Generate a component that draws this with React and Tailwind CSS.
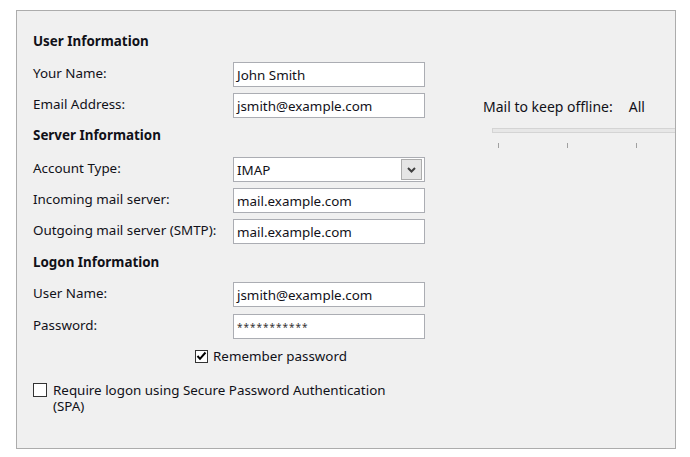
import React from "react";

const font = { fontFamily: '"Noto Sans", "Open Sans", sans-serif' };

function Field({ label, value, mt = "mt-[6px]" }) {
  return (
    <div className={`flex items-center h-[25px] ${mt}`}>
      <div className="w-[200px] -mt-[3px] leading-[16px] whitespace-nowrap">{label}</div>
      <div className="w-[192px] h-[25px] bg-white border border-[#abadb3] flex items-center pl-[3px] leading-[16px]">
        {value}
      </div>
    </div>
  );
}

export default function App() {
  return (
    <div className="w-[690px] h-[457px] bg-white pt-[10px] pl-[16px]">
      <div
        className="w-[660px] h-[439px] border border-[#acacac] bg-[#f0f0f0] overflow-hidden flex text-[13.4px] text-[#111118]"
        style={font}
      >
        <div className="w-[450px] shrink-0 pl-[16px] pt-[22px] flex flex-col">
          <div className="font-bold leading-[16px] h-[16px]">User Information</div>
          <Field label="Your Name:" value="John Smith" mt="mt-[13px]" />
          <Field label="Email Address:" value="jsmith@example.com" />
          <div className="font-bold leading-[16px] h-[16px] mt-[9px]">Server Information</div>
          <div className="flex items-center h-[25px] mt-[14px]">
            <div className="w-[200px] -mt-[3px] leading-[16px]">Account Type:</div>
            <div className="w-[192px] h-[25px] bg-white border border-[#abadb3] flex items-center justify-between pl-[3px] pr-[2px] leading-[16px]">
              <span>IMAP</span>
              <div className="w-[21px] h-[21px] bg-[#e5e5e5] border border-[#acacac] flex items-center justify-center">
                <svg width="9" height="6" viewBox="0 0 9 6">
                  <path d="M1 1 L4.5 4.5 L8 1" fill="none" stroke="#404040" strokeWidth="2" />
                </svg>
              </div>
            </div>
          </div>
          <Field label="Incoming mail server:" value="mail.example.com" />
          <Field label="Outgoing mail server (SMTP):" value="mail.example.com" />
          <div className="font-bold leading-[16px] h-[16px] mt-[10px]">Logon Information</div>
          <Field label="User Name:" value="jsmith@example.com" mt="mt-[12px]" />
          <Field
            label="Password:"
            value={<span className="text-[10px] tracking-[1px] text-[#333]">***********</span>}
            mt="mt-[7px]"
          />
          <div className="flex items-center mt-[9px] pl-[162px] h-[16px] leading-[16px]">
            <div className="w-[13px] h-[13px] border border-[#333] bg-white flex items-center justify-center mr-[5px]">
              <svg width="11" height="10" viewBox="0 0 11 10">
                <path d="M1.5 5 L4 7.8 L9.5 1.5" fill="none" stroke="#000" strokeWidth="2" />
              </svg>
            </div>
            <span>Remember password</span>
          </div>
          <div className="flex items-start mt-[18px]">
            <div className="w-[14px] h-[14px] border border-[#333] bg-white mt-[1px] mr-[6px] shrink-0" />
            <div className="leading-[16px] w-[345px]">
              Require logon using Secure Password Authentication (SPA)
            </div>
          </div>
        </div>
        <div className="flex-1 pl-[16px] pt-[88px] flex flex-col">
          <div className="leading-[16px] whitespace-nowrap text-[14px]">
            Mail to keep offline:<span className="ml-[16px]">All</span>
          </div>
          <div className="ml-[9px] mt-[13px] h-[5px] w-[220px] bg-[#e7e7e7] border border-[#d4d4d4]" />
          <div className="ml-[15px] mt-[10px] flex gap-[68px]">
            <div className="w-px h-[5px] bg-[#a0a0a0]" />
            <div className="w-px h-[5px] bg-[#a0a0a0]" />
            <div className="w-px h-[5px] bg-[#a0a0a0]" />
          </div>
        </div>
      </div>
    </div>
  );
}
